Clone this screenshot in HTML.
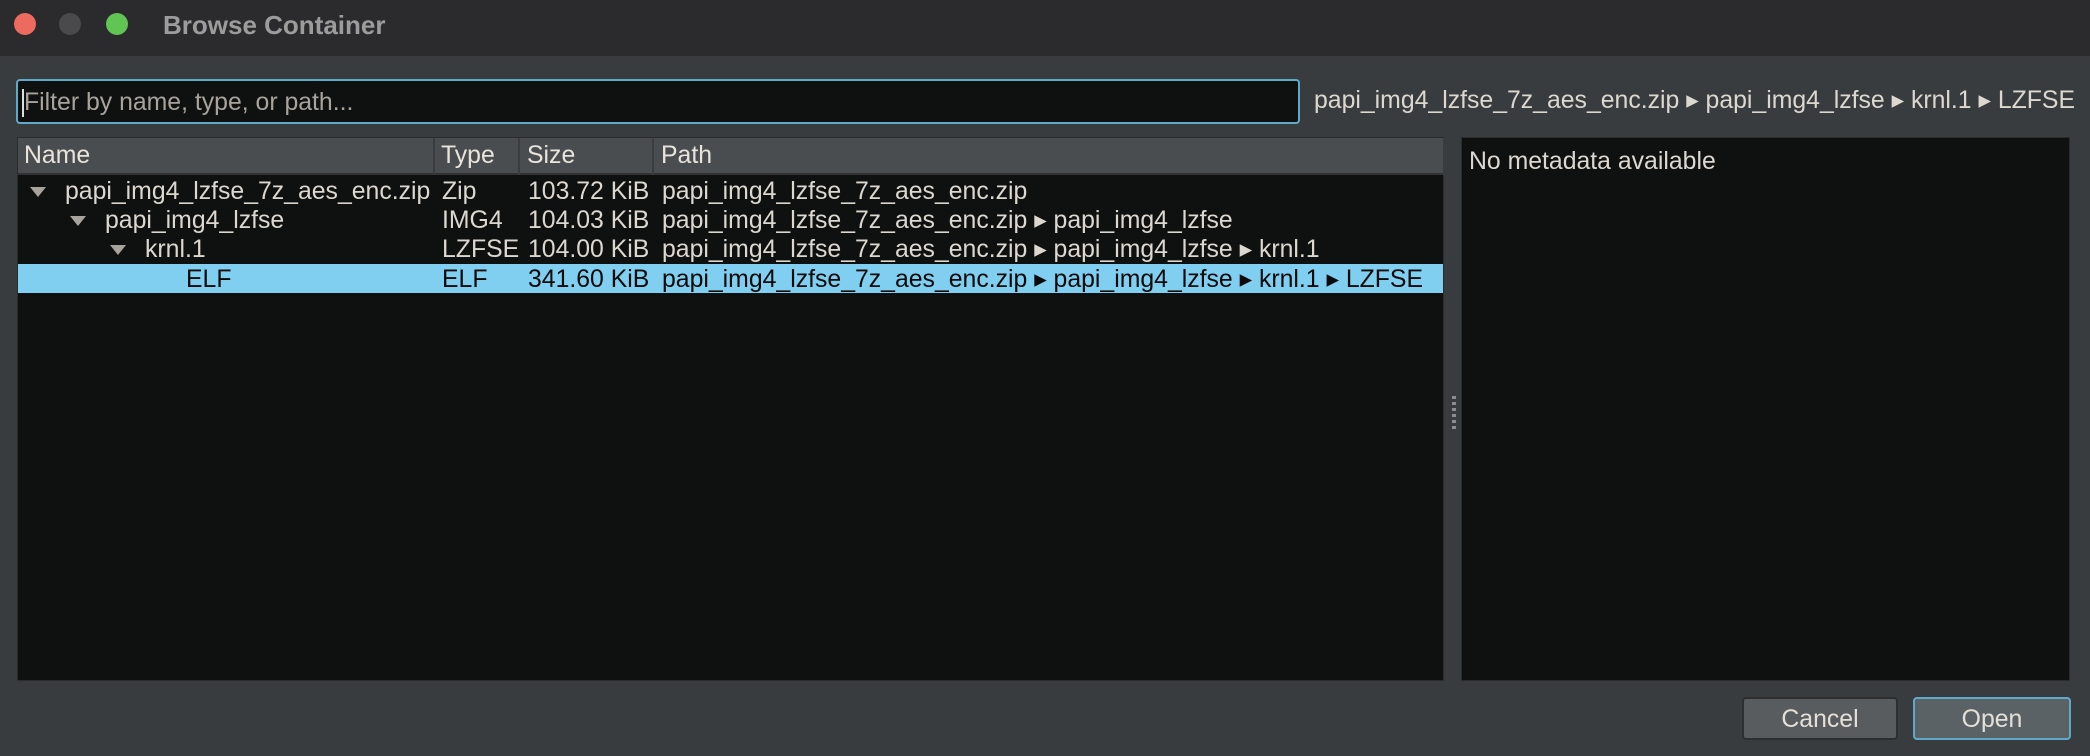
<!DOCTYPE html>
<html><head><meta charset="utf-8"><style>
*{margin:0;padding:0;box-sizing:border-box}
body{width:2090px;height:756px;background:#393c3e;font-family:"Liberation Sans",sans-serif;color:#dcd8d0;position:relative;overflow:hidden;font-size:24.8px}
.tb{position:absolute;left:0;top:0;width:2090px;height:56px;background:#2b2b2d}
.dot{position:absolute;top:13px;width:22px;height:22px;border-radius:50%}
.title{position:absolute;left:163px;top:10px;font-weight:bold;font-size:26px;color:#9c9c9c}
.inp{position:absolute;left:16px;top:79px;width:1284px;height:45px;background:#0f1111;border:2px solid #5fa9c9;border-radius:4px}
.inp span{position:absolute;left:6px;top:8px;color:#a8a49c}
.inp i{position:absolute;left:4px;top:8px;width:2px;height:28px;background:#ddd}
.crumb{position:absolute;left:1314px;top:86px;height:30px;line-height:30px;white-space:nowrap}
.tree{position:absolute;left:17px;top:137px;width:1427px;height:544px;background:#0f1111;border:1px solid #2a2c2d}
.hdr{position:absolute;left:0;top:0;width:100%;height:37px;background:#4a4d4f;border-bottom:2px solid #303233}
.hc{position:absolute;top:4px;color:#e8e4dc}
.sep{position:absolute;top:0;width:2px;height:37px;background:#3a3c3d}
.row{position:absolute;left:0;width:100%;height:29px;white-space:nowrap}
.row span{position:absolute;top:1px;height:29px;line-height:29px}
.tri{position:absolute;top:11px;width:0;height:0;border-left:8px solid transparent;border-right:8px solid transparent;border-top:10px solid #a8a49c}
.sel{background:#81cff0;color:#0a0a0a}
.meta{position:absolute;left:1461px;top:137px;width:609px;height:544px;background:#0f1111;border:1px solid #2a2c2d}
.btn{position:absolute;top:697px;height:43px;border-radius:4px;text-align:center;line-height:41px;color:#e4e0d8}
</style></head><body>
<div class="tb">
<div class="dot" style="left:14px;background:#ed6a5e"></div>
<div class="dot" style="left:59px;background:#4a4a4c"></div>
<div class="dot" style="left:106px;background:#61c554"></div>
<div class="title">Browse Container</div>
</div>
<div class="inp"><i></i><span>Filter by name, type, or path...</span></div>
<div class="crumb">papi_img4_lzfse_7z_aes_enc.zip ▸ papi_img4_lzfse ▸ krnl.1 ▸ LZFSE</div>
<div class="tree">
<div class="hdr">
<span class="hc" style="left:6px">Name</span><div class="sep" style="left:415px"></div>
<span class="hc" style="left:423px">Type</span><div class="sep" style="left:500px"></div>
<span class="hc" style="left:509px">Size</span><div class="sep" style="left:634px"></div>
<span class="hc" style="left:643px">Path</span><div class="sep" style="left:1425px"></div>
</div>
<div class="row" style="top:38px"><div class="tri" style="left:12px"></div><span style="left:47px">papi_img4_lzfse_7z_aes_enc.zip</span><span style="left:424px">Zip</span><span style="left:510px">103.72 KiB</span><span style="left:644px">papi_img4_lzfse_7z_aes_enc.zip</span></div>
<div class="row" style="top:67px"><div class="tri" style="left:52px"></div><span style="left:87px">papi_img4_lzfse</span><span style="left:424px">IMG4</span><span style="left:510px">104.03 KiB</span><span style="left:644px">papi_img4_lzfse_7z_aes_enc.zip ▸ papi_img4_lzfse</span></div>
<div class="row" style="top:96px"><div class="tri" style="left:92px"></div><span style="left:127px">krnl.1</span><span style="left:424px">LZFSE</span><span style="left:510px">104.00 KiB</span><span style="left:644px">papi_img4_lzfse_7z_aes_enc.zip ▸ papi_img4_lzfse ▸ krnl.1</span></div>
<div class="row sel" style="top:126px"><span style="left:168px">ELF</span><span style="left:424px">ELF</span><span style="left:510px">341.60 KiB</span><span style="left:644px">papi_img4_lzfse_7z_aes_enc.zip ▸ papi_img4_lzfse ▸ krnl.1 ▸ LZFSE</span></div>
</div>
<div style="position:absolute;left:1452px;top:396px;width:4px;height:34px;background:repeating-linear-gradient(#8a8d8f 0 3px,transparent 3px 6px)"></div>
<div class="meta"><span style="position:absolute;left:7px;top:10px">No metadata available</span></div>
<div class="btn" style="left:1742px;width:156px;background:#585c5e;border:2px solid #2c2e2f">Cancel</div>
<div class="btn" style="left:1913px;width:158px;background:#5a6266;border:2px solid #5fa9c9">Open</div>
</body></html>
